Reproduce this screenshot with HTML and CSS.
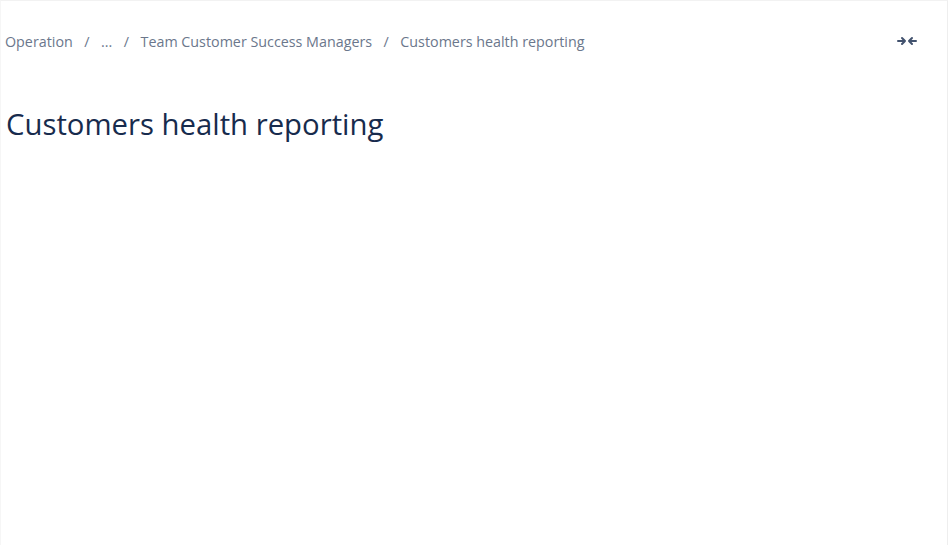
FILE: index.html
```html
<!DOCTYPE html>
<html lang="en">
<head>
    <meta charset="UTF-8">
    <title>Customers health reporting</title>
    <link rel="stylesheet" href="styles.css">
</head>
<body>
    <div class="page">
        <div class="topbar">
            <nav class="crumbs">
                <a href="#">Operation</a>
                <span class="sep">/</span>
                <a href="#">...</a>
                <span class="sep">/</span>
                <a href="#">Team Customer Success Managers</a>
                <span class="sep">/</span>
                <a href="#">Customers health reporting</a>
            </nav>
            <button class="collapse" aria-label="Collapse width">
                <svg width="20" height="12" viewBox="0 0 20 12">
                    <path d="M1 6h7M5 3l3 3-3 3M19 6h-7M15 3l-3 3 3 3" fill="none" stroke="#42526e" stroke-width="2" stroke-linecap="round" stroke-linejoin="round"/>
                </svg>
            </button>
        </div>
        <h1>Customers health reporting</h1>
    </div>
</body>
</html>
```
FILE: styles.css
```css
html, body {
    margin: 0;
    height: 100%;
}
body {
    font-family: "Open Sans", "Noto Sans", sans-serif;
    background: #ffffff;
}
.page {
    box-sizing: border-box;
    height: 100%;
    border-top: 1px solid #f2f2f2;
    border-right: 1px solid #eeeeee;
    border-left: 1px solid #f6f6f6;
    padding: 0 0 0 4px;
}
.topbar {
    display: flex;
    align-items: center;
    justify-content: space-between;
    padding: 28px 30px 0 0;
    height: 24px;
}
.crumbs {
    font-size: 14.3px;
    color: #6b778c;
    display: flex;
    align-items: center;
}
.crumbs a {
    color: #6b778c;
    text-decoration: none;
}
.sep {
    padding: 0 11.5px;
}
.collapse {
    background: none;
    border: none;
    padding: 0;
    display: flex;
    cursor: pointer;
}
h1 {
    margin: 51px 0 0 1px;
    font-size: 29.3px;
    font-weight: 400;
    color: #172b4d;
}
```
